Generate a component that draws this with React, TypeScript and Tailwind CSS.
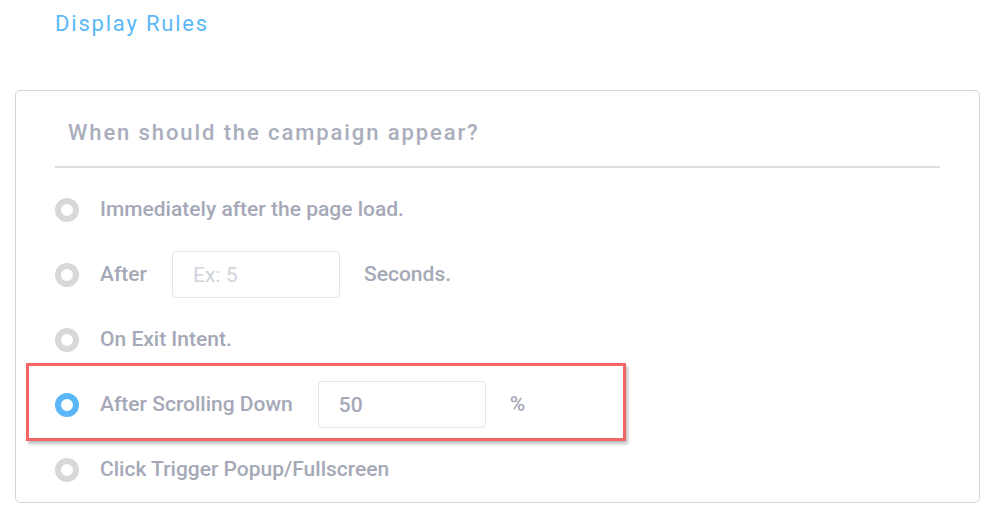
import React from "react";

type Option = {
  id: string;
  label: string;
  input?: { value?: string; placeholder?: string; suffix: string };
  checked?: boolean;
};

const options: Option[] = [
  { id: "load", label: "Immediately after the page load." },
  { id: "after", label: "After", input: { placeholder: "Ex: 5", suffix: "Seconds." } },
  { id: "exit", label: "On Exit Intent." },
  { id: "scroll", label: "After Scrolling Down", input: { value: "50", suffix: "%" }, checked: true },
  { id: "click", label: "Click Trigger Popup/Fullscreen" },
];

function Radio({ checked }: { checked?: boolean }) {
  return (
    <span
      className={
        "block w-6 h-6 rounded-full border-[6px] bg-white shrink-0 " +
        (checked ? "border-[#5bb6f8]" : "border-[#d8d8d8]")
      }
    />
  );
}

export default function App() {
  return (
    <div
      className="w-[1000px] h-[523px] bg-white overflow-hidden"
      style={{ fontFamily: "Roboto, 'Noto Sans', sans-serif" }}
    >
      <h2 className="pl-[55px] pt-[9px] text-[22px] leading-[30px] tracking-[1.8px] text-[#5cb8f7] font-normal">
        Display Rules
      </h2>

      <div className="relative ml-[15px] mt-[51px] w-[965px] h-[413px] border border-[#d3d6de] rounded-[5px] px-[39px]">
        <h3 className="pt-[27px] pb-[18px] pl-[13px] text-[22px] leading-[30px] font-medium tracking-[1.9px] text-[#a9aebc] border-b-2 border-[#dcdee4]">
          When should the campaign appear?
        </h3>

        <div className="pt-[9px] flex flex-col">
          {options.map((o) => (
            <div key={o.id} className="h-[65px] flex items-center">
              <Radio checked={o.checked} />
              <span className="ml-[21px] text-[21px] font-medium text-[#a5a9b7]">
                {o.label}
              </span>
              {o.input && (
                <>
                  <input
                    readOnly
                    value={o.input.value ?? ""}
                    placeholder={o.input.placeholder}
                    className="ml-[25px] w-[168px] h-[47px] border border-[#e4e6ed] rounded-[4px] px-5 text-[21px] font-medium text-[#a5a9b7] placeholder:text-[#d0d3dc] placeholder:font-normal outline-none"
                  />
                  <span className="ml-[24px] text-[21px] font-medium text-[#a5a9b7]">
                    {o.input.suffix}
                  </span>
                </>
              )}
            </div>
          ))}
        </div>

        {/* annotation highlight */}
        <div className="absolute left-[10px] top-[272px] w-[600px] h-[78px] border-[3px] border-[#f26666] shadow-[2px_3px_3px_rgba(0,0,0,0.25)] pointer-events-none" />
      </div>
    </div>
  );
}
